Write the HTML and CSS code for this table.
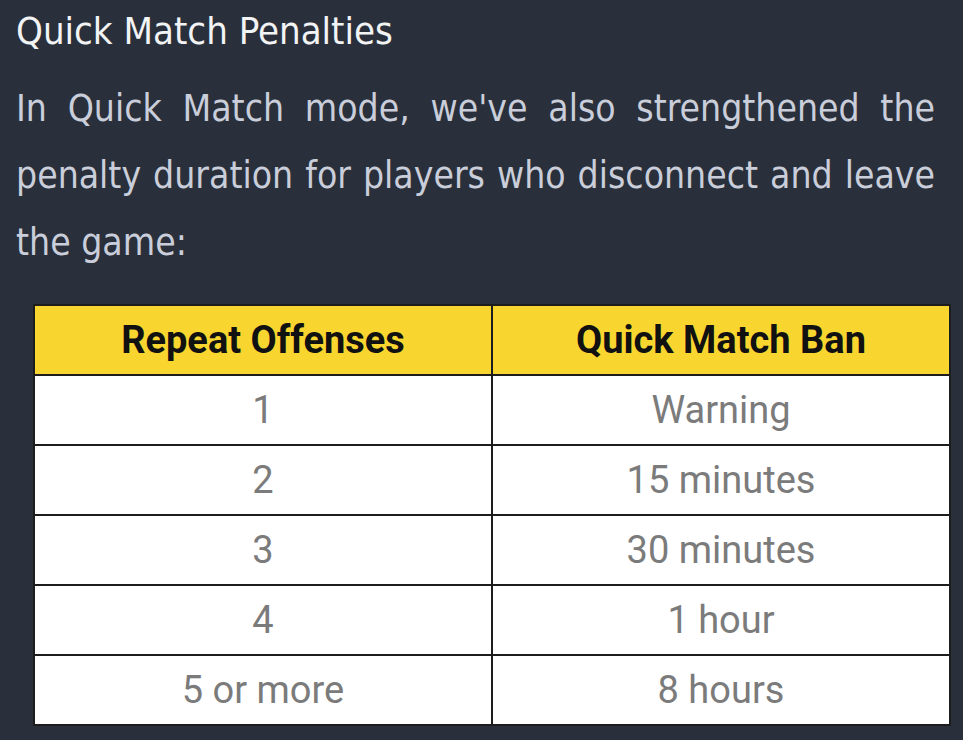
FILE: index.html
```html
<!DOCTYPE html>
<html lang="en">
<head>
<meta charset="utf-8">
<title>Quick Match Penalties</title>
<link rel="stylesheet" href="styles.css">
</head>
<body>
<main class="page">
  <h1 class="title">Quick Match Penalties</h1>
  <p class="intro">
    <span class="line">In Quick Match mode, we've also strengthened the</span>
    <span class="line">penalty duration for players who disconnect and leave</span>
    <span class="line last">the game:</span>
  </p>
  <table class="penalties">
    <thead>
      <tr><th>Repeat Offenses</th><th>Quick Match Ban</th></tr>
    </thead>
    <tbody>
      <tr><td>1</td><td>Warning</td></tr>
      <tr><td>2</td><td>15 minutes</td></tr>
      <tr><td>3</td><td>30 minutes</td></tr>
      <tr><td>4</td><td>1 hour</td></tr>
      <tr><td>5 or more</td><td>8 hours</td></tr>
    </tbody>
  </table>
</main>
</body>
</html>
```
FILE: styles.css
```css
html, body {
  margin: 0;
  padding: 0;
  background: #2a303b;
}
.page {
  padding: 0 16px;
  width: 963px;
  height: 740px;
  box-sizing: border-box;
  overflow: hidden;
}
.title {
  margin: 0;
  font-family: "Liberation Sans Narrow", "DejaVu Sans Condensed", Roboto, sans-serif;
  font-weight: 400;
  font-size: 38px;
  line-height: 62px;
  color: #f2f3f5;
}
.intro {
  margin: 13px 0 0;
  font-family: "Liberation Sans Narrow", "DejaVu Sans Condensed", Roboto, sans-serif;
  font-size: 37px;
  line-height: 67px;
  color: #c9ceda;
  width: 919px;
}
.line {
  display: block;
  text-align: justify;
  text-align-last: justify;
  white-space: nowrap;
}
.line.last {
  text-align-last: left;
}
.penalties {
  margin: 28px 0 0 17px;
  width: 918px;
  border-collapse: collapse;
  table-layout: fixed;
  font-family: Roboto, "Liberation Sans", sans-serif;
  font-size: 38px;
}
.penalties th,
.penalties td {
  border: 2px solid #1d1d1d;
  height: 68px;
  padding: 0;
  text-align: center;
  vertical-align: middle;
}
.penalties th {
  background: #f8d62f;
  color: #111;
  font-weight: 700;
}
.penalties td {
  background: #fff;
  color: #7b7b7b;
  font-weight: 400;
}
```
